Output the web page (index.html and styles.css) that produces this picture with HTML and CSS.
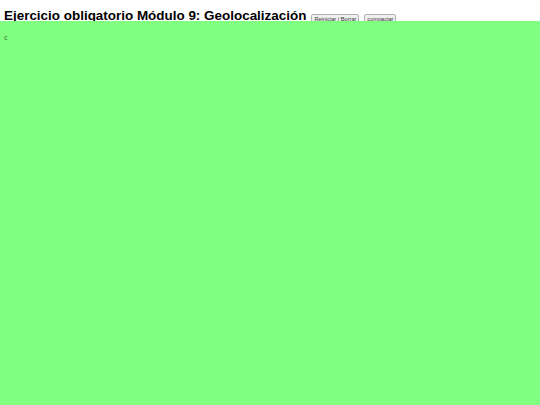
FILE: index.html
```html
<!DOCTYPE html>
<html lang="es">
<head>
<meta charset="utf-8">
<title>Geolocalización</title>
<link rel="stylesheet" href="styles.css">
</head>
<body>
<header class="top">
  <h1 class="title">Ejercicio obligatorio Módulo 9: Geolocalización</h1>
  <button class="btn" type="button">Reiniciar / Borrar</button>
  <button class="btn" type="button">compactar</button>
</header>
<main class="map">
  <p class="note">c</p>
</main>
</body>
</html>
```

FILE: styles.css
```css
html, body {
  margin: 0;
  padding: 0;
  height: 100%;
  background: #ffffff;
}
body {
  display: flex;
  flex-direction: column;
  font-family: "Liberation Sans", Arial, sans-serif;
}
.top {
  height: 21px;
  flex: none;
  overflow: hidden;
  display: flex;
  align-items: flex-start;
  padding: 8px 0 0 4px;
  box-sizing: border-box;
  gap: 4px;
}
.title {
  margin: 0;
  font-size: 13.45px;
  font-weight: bold;
  line-height: 16px;
  color: #000;
  white-space: nowrap;
}
.btn {
  font-family: "Liberation Sans", Arial, sans-serif;
  font-size: 5.6px;
  line-height: 8px;
  padding: 0 2px;
  margin: 6px 0 0 1px;
  border: 1px solid #b0b0b0;
  border-radius: 2px;
  background: #efefef;
  color: #333;
}
.map {
  flex: 1;
  background: #80ff80;
  padding: 13px 0 0 4px;
}
.note {
  margin: 0;
  font-size: 7px;
  line-height: 8px;
  color: #3c7a3c;
}
```
